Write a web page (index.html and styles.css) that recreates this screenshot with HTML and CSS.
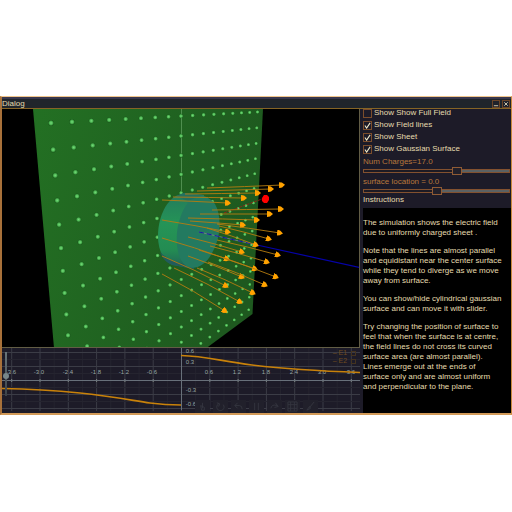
FILE: index.html
```
<!DOCTYPE html>
<html lang="en">
<head>
    <meta charset="utf-8">
    <title>Charged Sheet</title>
    <link rel="stylesheet" href="styles.css">
</head>
<body>
    <div class="dialog">
        <header class="title-bar">
            <h1>Dialog</h1>
            <div class="window-buttons">
                <button type="button" aria-label="Minimize"><svg viewBox="0 0 7 7"><path d="M1 5.5h5"/></svg></button>
                <button type="button" aria-label="Close"><svg viewBox="0 0 7 7"><path d="M1.5 1.5l4 4M5.5 1.5l-4 4"/></svg></button>
            </div>
        </header>
        <main class="content">
            <div class="views">
                <svg class="scene" viewBox="2 109 357 238" role="img" aria-label="Electric field of a charged sheet">
                    <defs>
                        <linearGradient id="sheetFill" x1="0" y1="0" x2="1" y2="0.3">
                            <stop offset="0" stop-color="#237023"/>
                            <stop offset="1" stop-color="#1e591f"/>
                        </linearGradient>
                        <linearGradient id="bodyFill" x1="0" y1="0" x2="0" y2="1">
                            <stop offset="0" stop-color="#237a5c"/>
                            <stop offset="0.4" stop-color="#259457"/>
                            <stop offset="0.75" stop-color="#238c52"/>
                            <stop offset="1" stop-color="#20605a"/>
                        </linearGradient>
                        <radialGradient id="chargeFill">
                            <stop offset="0" stop-color="#78dc7e"/>
                            <stop offset="0.55" stop-color="#4cb652"/>
                            <stop offset="1" stop-color="#1a5a1c"/>
                        </radialGradient>
                        <marker id="arrow" viewBox="0 0 6 6" refX="3" refY="3" markerWidth="6" markerHeight="6" markerUnits="userSpaceOnUse" orient="auto">
                            <path d="M0 0L3 0.6L6 3L3 5.4L0 6z" fill="#ffa200"/>
                        </marker>
                    </defs>
                    <path d="M33 109H263L252.500 314L206.500 348H54z" fill="url(#sheetFill)"/>
                    <path d="M181.500 109V194" stroke="#5c9a5c" stroke-width="0.8"/>
                    <g id="charges"></g>
                    <!-- gaussian cylinder -->
                    <path d="M176 196C165 202 158 219 158 236C158 250 163 260 172 265L194 269L204 195L184 193z" fill="url(#bodyFill)"/>
                    <path d="M160 252C163 260 167 263 173 265L194 269L184 264C175 262 167 259 160 252z" fill="#215b5c"/>
                    <path d="M178 195C195 192 209 195 215 204C222 216 221 238 212 253C206 265 196 270 188 267C178 262 176 246 177 233C178 222 182 210 188 203z" fill="#237a60"/>
                    <path d="M176 196L184 193L203 195L188 201z" fill="#23705f"/>
                    <!-- axes -->
                    <path d="M224 213L262 199" stroke="#a51c14" stroke-width="0.8" stroke-dasharray="3 1"/>
                    <path d="M199 232L257 245" stroke="#7b8d82" stroke-width="0.8"/>
                    <path d="M199 232L257 245" stroke="#1513ab" stroke-dasharray="5 3"/>
                    <path d="M257 245L360 267.500" stroke="#0502a8" stroke-width="1.2"/>
                    <g id="fieldLines" class="field-lines"></g>
                    <path d="M262 198l2-3h3l2 2v3l-2 3h-3l-2-2z" fill="#f00"/>
                </svg>
                <div class="plot">
                    <svg viewBox="2 349 358 65" role="img" aria-label="Field against distance">
                        <g id="plotGrid"></g>
                        <path class="axis" d="M2 381.500H360M181.500 349V411"/>
                        <g class="plot-labels">
                            <text x="11" y="375">-3.6</text>
                            <text x="39" y="375">-3.0</text>
                            <text x="68" y="375">-2.4</text>
                            <text x="96" y="375">-1.8</text>
                            <text x="124" y="375">-1.2</text>
                            <text x="152" y="375">-0.6</text>
                            <text x="209" y="375">0.6</text>
                            <text x="237" y="375">1.2</text>
                            <text x="266" y="375">1.8</text>
                            <text x="294" y="375">2.4</text>
                            <text x="322" y="375">3.0</text>
                            <text x="351" y="375">3.6</text>
                            <text x="190" y="354">0.6</text>
                            <text x="190" y="365">0.3</text>
                            <text x="191" y="393">-0.3</text>
                            <text x="191" y="407">-0.6</text>
                        </g>
                        <path class="curve" d="M2 389.500C30 390 55 391.500 80 394C110 397 130 401 150 404Q165 406 181 406"/>
                        <path class="curve" d="M181 356.500C205 357 220 362 252 366C285 370 320 372 360 373.500"/>
                    </svg>
                    <input class="zoom-slider" type="range" min="0" max="100" value="44" aria-label="Plot zoom">
                    <div class="legend">
                        <label>– E1 <input type="checkbox"></label>
                        <label>– E2 <input type="checkbox"></label>
                    </div>
                    <div class="plot-tools">
                        <button type="button" aria-label="Play"><svg viewBox="0 0 12 12"><path d="M6 2v6M4 5l4 2v3H5z"/></svg></button>
                        <button type="button" aria-label="Reset"><svg viewBox="0 0 12 12"><path d="M9 4a4 4 0 1 1-5-1M2 2l3 1-1 3"/></svg></button>
                        <button type="button" aria-label="Undo"><svg viewBox="0 0 12 12"><path d="M5 2L2 5l3 3M2 5h5q3 0 3 4"/></svg></button>
                        <button type="button" aria-label="Pause"><svg viewBox="0 0 12 12"><path d="M4 2v8M8 2v8"/></svg></button>
                        <button type="button" aria-label="Redo"><svg viewBox="0 0 12 12"><path d="M2 8q1-5 7-3M7 2l3 4-4 1"/></svg></button>
                        <button type="button" aria-label="Grid"><svg viewBox="0 0 12 12"><path d="M1 1h10v10H1zM1 4h10M1 8h10M4 1v10M8 1v10"/></svg></button>
                        <button type="button" aria-label="Edit"><svg viewBox="0 0 12 12"><path d="M10 1L5 7M5 6l-3 4 4-2z"/></svg></button>
                    </div>
                </div>
            </div>
            <aside class="side-panel">
                <div class="options">
                    <label class="check"><input type="checkbox"> Show Show Full Field</label>
                    <label class="check"><input type="checkbox" checked> Show Field lines</label>
                    <label class="check"><input type="checkbox" checked> Show Sheet</label>
                    <label class="check"><input type="checkbox" checked> Show Gaussian Surface</label>
                </div>
                <div class="slider">
                    <label for="numCharges">Num Charges=17.0</label>
                    <input type="range" id="numCharges" class="charges" min="0" max="100" value="65">
                </div>
                <div class="slider">
                    <label for="surfaceLocation">surface location = 0.0</label>
                    <input type="range" id="surfaceLocation" class="location" min="-10" max="10" value="0">
                </div>
                <h2>Instructions</h2>
                <div class="instructions">
                    <p>The simulation shows the electric field<br>due to uniformly charged sheet .</p>
                    <p>Note that the lines are almost parallel<br>and equidistant near the center surface<br>while they tend to diverge as we move<br>away from surface.</p>
                    <p>You can show/hide cylindrical gaussian<br>surface and can move it with slider.</p>
                    <p>Try changing the position of surface to<br>feel that when the surface is at centre,<br>the field lines do not cross its curved<br>surface area (are almost parallel).<br>Lines emerge out at the ends of<br>surface only and are almost uniform<br>and perpendicular to the plane.</p>
                </div>
            </aside>
        </main>
    </div>
    <script src="scene.js"></script>
</body>
</html>
```
FILE: styles.css
```
* {
    box-sizing: border-box;
}
body {
    margin: 0;
    padding-top: 96px;
    background: #fff;
    font-family: "Liberation Sans", Arial, sans-serif;
    font-size: 8px;
    line-height: 10px;
    color: #e6dcae;
}
.dialog {
    background: #1d1b28;
    border: 1px solid #c88a3c;
    border-top-color: #f0c58c;
    border-left: 2px solid #a8713a;
    border-bottom: 2px solid #d29a58;
}
.title-bar {
    display: flex;
    justify-content: space-between;
    align-items: center;
    height: 12px;
    background: #20252b;
    border-top: 2px solid #38374d;
    border-bottom: 1px solid #866425;
}
h1, h2 {
    margin: 0;
    font-size: 8px;
    font-weight: normal;
}
.window-buttons {
    display: flex;
    gap: 2px;
    padding-right: 1px;
}
.window-buttons button {
    width: 8px;
    height: 8px;
    padding: 0;
    border: 1px solid #6c4528;
    background: #20222b;
}
button svg {
    display: block;
    width: 100%;
    height: 100%;
    fill: none;
    stroke: currentColor;
}
.window-buttons svg {
    color: #e5ddc0;
}
.content {
    display: grid;
    grid-template-columns: minmax(0, 1fr) 151px;
}
.scene {
    display: block;
    width: 100%;
    background: #000;
    border: 1px solid #625d45;
    border-width: 0 1px 1px 0;
}
.field-lines path {
    fill: none;
    stroke: #b77d10;
    stroke-width: 0.9;
}
.plot {
    position: relative;
}
.plot > svg {
    display: block;
    width: 100%;
}
.axis {
    stroke: #68707a;
}
.grid-minor {
    stroke: #25242f;
}
.grid-major {
    stroke: #3b3c46;
}
.tick {
    stroke: #7d8582;
}
.plot-labels {
    font-size: 6px;
    text-anchor: middle;
    fill: #98a5a3;
}
.curve {
    fill: none;
    stroke: #c9820a;
    stroke-width: 1.6;
}
.zoom-slider {
    position: absolute;
    left: 0;
    top: 4px;
    width: 8px;
    height: 44px;
    margin: 0;
    appearance: none;
    writing-mode: vertical-lr;
    direction: rtl;
    background: linear-gradient(#68757a, #3a4148) center / 2px 100% no-repeat;
}
.zoom-slider::-webkit-slider-thumb {
    appearance: none;
    width: 6px;
    height: 6px;
    border-radius: 50%;
    background: #77868a;
}
.legend {
    position: absolute;
    top: 1px;
    right: 4px;
    display: grid;
    color: #704b20;
    font-size: 7px;
    line-height: 8px;
}
.legend label {
    display: flex;
    gap: 2px;
    align-items: center;
    white-space: pre;
}
.legend input {
    appearance: none;
    width: 5px;
    height: 5px;
    margin: 0;
    border: 1px solid #44331f;
}
.plot-tools {
    position: absolute;
    left: 54%;
    bottom: 0;
    display: flex;
    gap: 3px;
}
.plot-tools button {
    width: 15px;
    height: 13px;
    padding: 1px 2px;
    border: 0;
    background: #21202b;
    color: #34363f;
}
.side-panel {
    display: flex;
    flex-direction: column;
    min-width: 0;
    padding-left: 3px;
}
.options {
    display: grid;
    grid-auto-rows: 12px;
    margin-top: -2px;
}
.check {
    display: flex;
    align-items: center;
    gap: 2px;
    white-space: nowrap;
}
.check input {
    appearance: none;
    width: 9px;
    height: 9px;
    margin: 0;
    border: 1px solid #7c4d2b;
    background: no-repeat center / 100%;
}
.check input:checked {
    background-image: url("data:image/svg+xml,%3Csvg xmlns='http://www.w3.org/2000/svg' viewBox='0 0 8 8'%3E%3Cpath d='M1 4l2 3L7 1' fill='none' stroke='%23f4eccb' stroke-width='1.2'/%3E%3C/svg%3E");
}
.slider {
    height: 20px;
    padding: 2px 1px 0 0;
    color: #b8783c;
}
.slider label, .slider input {
    display: block;
}
.slider input {
    appearance: none;
    width: 100%;
    height: 8px;
    margin: 0;
    background: transparent;
}
.slider input::-webkit-slider-runnable-track {
    height: 4px;
    border: 1px solid #83512f;
}
.slider input::-webkit-slider-thumb {
    appearance: none;
    width: 10px;
    height: 8px;
    margin-top: -3px;
    border: 1px solid #8f5b35;
    background: #211f29;
}
.charges::-webkit-slider-runnable-track {
    background: linear-gradient(to right, #1d1b24 65%, #5b6163 65%);
}
.location::-webkit-slider-runnable-track {
    background: linear-gradient(to right, #1d1b24 50%, #5b6163 50%);
}
h2 {
    padding-bottom: 3px;
}
.instructions {
    flex: 1;
    padding-top: 10px;
    background: #000;
    white-space: nowrap;
}
.instructions p {
    margin: 0 0 8px;
}
```
FILE: scene.js
```
const SVG_NS = 'http://www.w3.org/2000/svg';

function add(parent, name, attrs) {
    const el = document.createElementNS(SVG_NS, name);
    for (const key in attrs) el.setAttribute(key, attrs[key]);
    parent.appendChild(el);
}

// charges sit on a regular grid, seen in perspective
const charges = document.getElementById('charges');
for (let v = 0; v < 15; v++) {
    for (let u = 0; u < 17; u++) {
        const w = 1 + 0.04371 * u + 0.01638 * v;
        add(charges, 'circle', {
            cx: (51 + 24.161 * u + 3.003 * v) / w,
            cy: (123 + 4.208 * u + 29.08 * v) / w,
            r: 0.5 + 2.4 / w,
            fill: 'url(#chargeFill)'
        });
    }
}

// start x, y and tip x, y
const lines = [
    [207, 188, 282, 185], [197, 191, 271, 189], [185, 194, 258, 193], [173, 197, 244, 198], [162, 200, 228, 203],
    [212, 210, 281, 209], [200, 214, 270, 214], [188, 218, 257, 220], [190, 221, 243, 225], [162, 220, 228, 232],
    [217, 224, 280, 233], [219, 226, 269, 239], [207, 228, 256, 245], [188, 237, 242, 252], [162, 238, 227, 259],
    [217, 240, 278, 255], [210, 246, 267, 262], [199, 250, 255, 269], [188, 256, 242, 277], [162, 256, 226, 286],
    [223, 258, 276, 277], [208, 262, 265, 285], [197, 268, 253, 293], [174, 268, 240, 302], [162, 274, 225, 311]
];
const fieldLines = document.getElementById('fieldLines');
for (const [x1, y1, x2, y2] of lines) {
    const bend = (y2 - y1) * 0.06;
    add(fieldLines, 'path', {
        d: `M${x1} ${y1}Q${(x1 + x2) / 2} ${(y1 + y2) / 2 - bend} ${x2} ${y2}`,
        'marker-end': 'url(#arrow)'
    });
}

const grid = document.getElementById('plotGrid');
for (let i = -12; i <= 12; i++) {
    const x = 181.5 + i * 14.15;
    add(grid, 'path', { class: i % 2 ? 'grid-minor' : 'grid-major', d: `M${x} 349V412` });
    if (i % 2 === 0) add(grid, 'path', { class: 'tick', d: `M${x} 380V383` });
}
for (let i = -4; i <= 4; i++) {
    const y = 381.5 + i * 7;
    add(grid, 'path', { class: i % 2 ? 'grid-minor' : 'grid-major', d: `M2 ${y}H360` });
}
```
